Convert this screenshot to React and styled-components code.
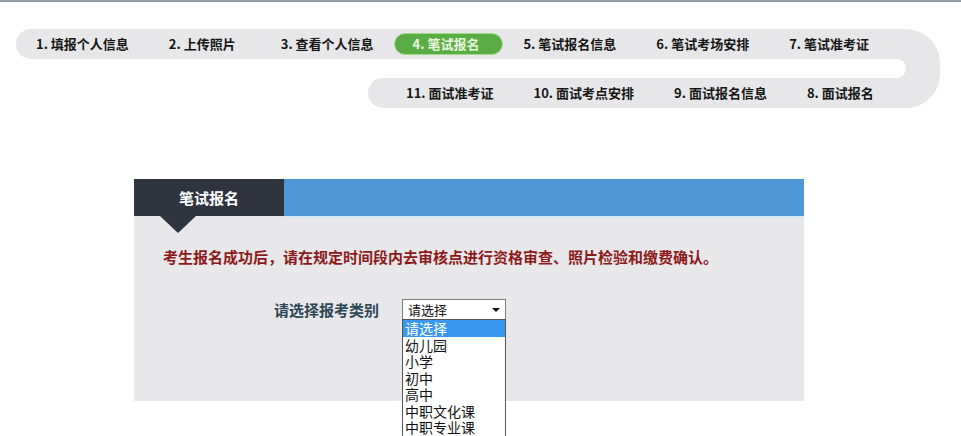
import styled, { createGlobalStyle } from 'styled-components';

const GlobalStyle = createGlobalStyle`
  html, body {
    margin: 0;
    padding: 0;
    background: #fff;
  }
  body {
    font-family: "Noto Sans CJK SC", "Liberation Sans", sans-serif;
    height: 436px;
    overflow: hidden;
  }
`;

const TopLine = styled.div`
  height: 2px;
  background: #939da6;
`;

const Track = styled.nav`
  display: flex;
  width: 924px;
  margin: 27px 0 0 16px;
`;

const Lanes = styled.div`
  flex: 1;
  display: flex;
  flex-direction: column;
`;

const Lane = styled.div`
  display: flex;
  align-items: center;
  height: 30px;
  margin-left: ${(p) => p.$indent || 0}px;
  padding-left: ${(p) => p.$pad || 0}px;
  background: #e7e7e9;
  border-radius: 15px 0 0 15px;
`;

const Bend = styled.div`
  display: flex;
  height: 19px;
  background: #e7e7e9;
`;

const Hollow = styled.div`
  flex: 1;
  background: #fff;
  border-radius: 0 10px 10px 0;
`;

const Cap = styled.div`
  width: 34px;
  background: #e7e7e9;
  border-radius: 0 40px 40px 0 / 0 40px 40px 0;
`;

const Step = styled.span`
  padding: 0 20px 0 ${(p) => p.$lead || 20}px;
  font-size: 13px;
  font-weight: 700;
  color: #161616;
  white-space: nowrap;
  line-height: 30px;
`;

const ActiveStep = styled.span`
  height: 20px;
  line-height: 20px;
  padding: 0 23px 0 18px;
  font-size: 13px;
  font-weight: 700;
  color: #e9f6df;
  white-space: nowrap;
  background: #5aad45;
  border: 1px solid #a3d98f;
  border-radius: 11px;
`;

const Panel = styled.section`
  width: 670px;
  height: 222px;
  margin: 71px 0 0 134px;
  background: #e8e8ea;
`;

const PanelHead = styled.div`
  display: flex;
  height: 37px;
`;

const Tab = styled.div`
  position: relative;
  width: 150px;
  display: flex;
  align-items: center;
  justify-content: center;
  background: #30343f;
  color: #fff;
  font-size: 15px;
  font-weight: 700;

  &::after {
    content: '';
    position: absolute;
    top: 100%;
    left: 26px;
    border-left: 18px solid transparent;
    border-right: 18px solid transparent;
    border-top: 17px solid #30343f;
  }
`;

const HeadBar = styled.div`
  flex: 1;
  background: #4d97d6;
  box-shadow: 0 2px 0 #d3e7f5;
`;

const PanelBody = styled.div`
  padding: 31px 0 0 29px;
`;

const Notice = styled.p`
  margin: 0;
  font-size: 15px;
  font-weight: 700;
  line-height: 20px;
  color: #8c1a1a;
`;

const FieldRow = styled.div`
  display: flex;
  align-items: center;
  margin: 32px 0 0 111px;
`;

const Label = styled.label`
  font-size: 15px;
  font-weight: 700;
  color: #2d4656;
  margin-right: 23px;
`;

const Select = styled.div`
  position: relative;
  width: 104px;
  height: 21px;
  box-sizing: border-box;
  display: flex;
  align-items: center;
  justify-content: space-between;
  padding: 0 5px 0 5px;
  background: #fff;
  border: 1px solid #7c7c7c;
  font-size: 13px;
  color: #111;
`;

const Arrow = styled.span`
  width: 0;
  height: 0;
  border-left: 4px solid transparent;
  border-right: 4px solid transparent;
  border-top: 4px solid #111;
`;

const Options = styled.ul`
  position: absolute;
  top: 100%;
  left: -1px;
  width: 104px;
  box-sizing: border-box;
  margin: 0;
  padding: 0;
  list-style: none;
  background: #fff;
  border: 1px solid #555;
  z-index: 2;
`;

const Option = styled.li`
  height: 16.5px;
  line-height: 16.5px;
  padding-left: 2px;
  font-size: 14px;
  color: ${(p) => (p.$selected ? '#fff' : '#111')};
  background: ${(p) => (p.$selected ? '#3a97f0' : 'transparent')};
`;

const upper = ['1. 填报个人信息', '2. 上传照片', '3. 查看个人信息', '4. 笔试报名', '5. 笔试报名信息', '6. 笔试考场安排', '7. 笔试准考证'];
const lower = ['11. 面试准考证', '10. 面试考点安排', '9. 面试报名信息', '8. 面试报名'];
const choices = ['请选择', '幼儿园', '小学', '初中', '高中', '中职文化课', '中职专业课'];

export default function App() {
  return (
    <>
      <GlobalStyle />
      <TopLine />
      <Track>
        <Lanes>
          <Lane>
            {upper.map((s, i) =>
              s === '4. 笔试报名' ? (
                <ActiveStep key={s}>{s}</ActiveStep>
              ) : (
                <Step key={s} $lead={i === 2 ? 25 : 20}>
                  {s}
                </Step>
              )
            )}
          </Lane>
          <Bend>
            <Hollow />
          </Bend>
          <Lane $indent={352} $pad={18}>
            {lower.map((s) => (
              <Step key={s}>{s}</Step>
            ))}
          </Lane>
        </Lanes>
        <Cap />
      </Track>

      <Panel>
        <PanelHead>
          <Tab>笔试报名</Tab>
          <HeadBar />
        </PanelHead>
        <PanelBody>
          <Notice>考生报名成功后，请在规定时间段内去审核点进行资格审查、照片检验和缴费确认。</Notice>
          <FieldRow>
            <Label>请选择报考类别</Label>
            <Select>
              <span>请选择</span>
              <Arrow />
              <Options>
                {choices.map((c, i) => (
                  <Option key={c} $selected={i === 0}>
                    {c}
                  </Option>
                ))}
              </Options>
            </Select>
          </FieldRow>
        </PanelBody>
      </Panel>
    </>
  );
}
